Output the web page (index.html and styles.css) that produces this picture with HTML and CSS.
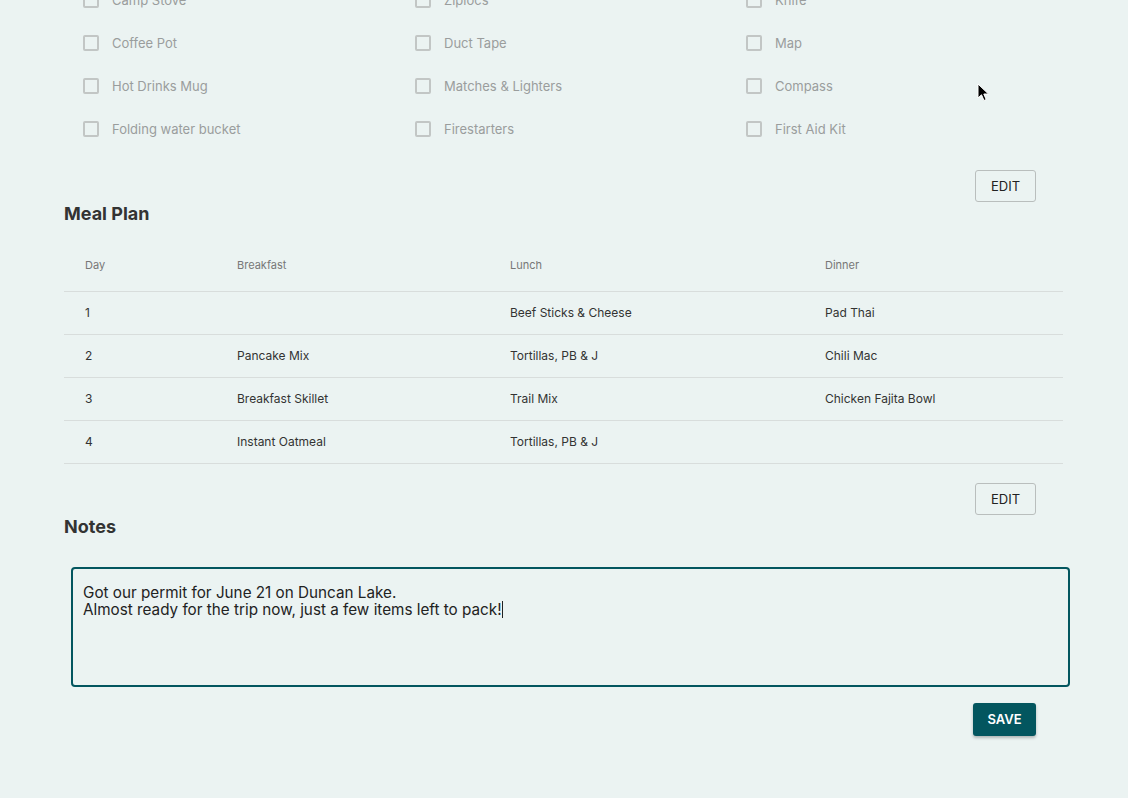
FILE: index.html
```html
<!DOCTYPE html>
<html lang="en">
<head>
<meta charset="utf-8">
<title>Trip Planner</title>
<link rel="stylesheet" href="styles.css">
</head>
<body>
<main class="page">
  <section class="gear">
    <ul class="checklist">
      <li class="item"><span class="box"></span><span class="label">Camp Stove</span></li>
      <li class="item"><span class="box"></span><span class="label">Ziplocs</span></li>
      <li class="item"><span class="box"></span><span class="label">Knife</span></li>
      <li class="item"><span class="box"></span><span class="label">Coffee Pot</span></li>
      <li class="item"><span class="box"></span><span class="label">Duct Tape</span></li>
      <li class="item"><span class="box"></span><span class="label">Map</span></li>
      <li class="item"><span class="box"></span><span class="label">Hot Drinks Mug</span></li>
      <li class="item"><span class="box"></span><span class="label">Matches &amp; Lighters</span></li>
      <li class="item"><span class="box"></span><span class="label">Compass</span></li>
      <li class="item"><span class="box"></span><span class="label">Folding water bucket</span></li>
      <li class="item"><span class="box"></span><span class="label">Firestarters</span></li>
      <li class="item"><span class="box"></span><span class="label">First Aid Kit</span></li>
    </ul>
    <div class="actions"><button class="btn-outline">EDIT</button></div>
  </section>

  <section class="meals">
    <h2 class="section-title">Meal Plan</h2>
    <table class="meal-table">
      <thead>
        <tr><th class="c-day">Day</th><th class="c-b">Breakfast</th><th class="c-l">Lunch</th><th class="c-d">Dinner</th></tr>
      </thead>
      <tbody>
        <tr><td>1</td><td></td><td>Beef Sticks &amp; Cheese</td><td>Pad Thai</td></tr>
        <tr><td>2</td><td>Pancake Mix</td><td>Tortillas, PB &amp; J</td><td>Chili Mac</td></tr>
        <tr><td>3</td><td>Breakfast Skillet</td><td>Trail Mix</td><td>Chicken Fajita Bowl</td></tr>
        <tr><td>4</td><td>Instant Oatmeal</td><td>Tortillas, PB &amp; J</td><td></td></tr>
      </tbody>
    </table>
    <div class="actions"><button class="btn-outline">EDIT</button></div>
  </section>

  <section class="notes">
    <h2 class="section-title">Notes</h2>
    <div class="note-box" role="textbox" aria-multiline="true">Got our permit for June 21 on Duncan Lake.<br>Almost ready for the trip now, just a few items left to pack!<span class="caret"></span></div>
    <div class="actions save-row"><button class="btn-primary">SAVE</button></div>
  </section>

  <svg class="pointer" width="14" height="20" viewBox="0 0 14 20" aria-hidden="true">
    <path d="M1 1 L1 15 L4.5 11.8 L7 17.5 L9.2 16.5 L6.8 11 L11.5 11 Z" fill="#000" stroke="#fff" stroke-width="1"/>
  </svg>
</main>
</body>
</html>
```
FILE: styles.css
```css
* { box-sizing: border-box; }

html, body {
  margin: 0;
  padding: 0;
  background: #ebf3f2;
  font-family: Inter, "Open Sans", "Liberation Sans", sans-serif;
  color: #333;
}

.page {
  position: relative;
  display: flow-root;
  padding: 0 65px 60px 64px;
}

.checklist {
  list-style: none;
  margin: -22px 0 0 0;
  padding: 0 0 0 19px;
  display: grid;
  grid-template-columns: 332px 331px 331px;
}

.item {
  height: 43px;
  display: flex;
  align-items: center;
  gap: 13px;
}

.box {
  width: 16px;
  height: 16px;
  border: 2px solid #c2c6c5;
  border-radius: 2px;
  flex: none;
}

.label {
  font-size: 13px;
  color: #9a9d9d;
}

.actions {
  display: flex;
  justify-content: flex-end;
  padding-right: 27px;
  margin-top: 20px;
}

.btn-outline {
  width: 61px;
  height: 32px;
  background: transparent;
  border: 1px solid #b9bebd;
  border-radius: 3px;
  font-family: inherit;
  font-size: 13px;
  color: #222;
  padding: 0;
}

.section-title {
  margin: 0;
  font-size: 18px;
  line-height: 24px;
  font-weight: 700;
  color: #333;
}

.meal-table {
  margin-top: 13px;
  width: 100%;
  border-collapse: collapse;
  table-layout: fixed;
}

.c-day { width: 152px; }
.c-b { width: 273px; }
.c-l { width: 315px; }
.c-d { width: 259px; }

.meal-table th {
  height: 52px;
  text-align: left;
  font-weight: 400;
  font-size: 11px;
  color: #777;
  padding: 0 0 0 21px;
  border-bottom: 1px solid #d8dddc;
}

.meal-table td {
  height: 43px;
  font-size: 12px;
  color: #333;
  padding: 0 0 0 21px;
  border-bottom: 1px solid #d8dddc;
}

.meals .actions { margin-top: 19px; }

.notes .section-title { margin-bottom: 28px; }

.note-box {
  margin-left: 7px;
  width: 999px;
  height: 120px;
  border: 2px solid #03565f;
  border-radius: 4px;
  padding: 15px 10px;
  font-size: 15.25px;
  line-height: 17px;
  color: #222;
}

.caret {
  display: inline-block;
  width: 1px;
  height: 17px;
  background: #222;
  vertical-align: top;
}

.notes .save-row { margin-top: 16px; }

.btn-primary {
  width: 63px;
  height: 33px;
  background: #03565f;
  color: #fff;
  border: none;
  border-radius: 3px;
  font-family: inherit;
  font-size: 13px;
  font-weight: 600;
  padding: 0;
  box-shadow: 0 2px 3px rgba(0,0,0,0.25);
}

.pointer {
  position: absolute;
  left: 977px;
  top: 83px;
}
```
